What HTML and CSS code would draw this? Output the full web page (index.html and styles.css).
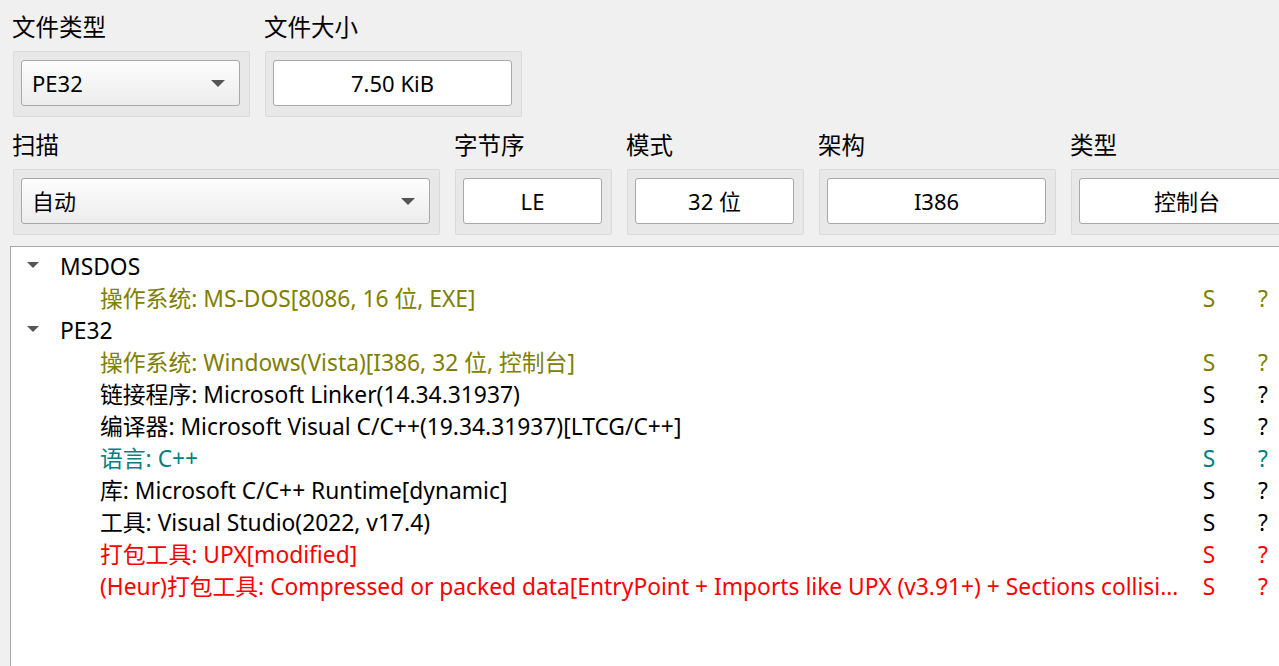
FILE: index.html
```html
<!DOCTYPE html>
<html lang="zh-CN">
<head>
  <meta charset="UTF-8" />
  <title>Detect It Easy</title>
  <link rel="stylesheet" href="styles.css">
</head>
<body>
  <div class="form-row">
    <div class="field">
      <label>文件类型</label>
      <div class="frame">
        <div class="combo w-type">PE32<span class="arrow"></span></div>
      </div>
    </div>
    <div class="field">
      <label>文件大小</label>
      <div class="frame">
        <div class="value w-size">7.50 KiB</div>
      </div>
    </div>
  </div>

  <div class="form-row second">
    <div class="field">
      <label>扫描</label>
      <div class="frame">
        <div class="combo w-scan">自动<span class="arrow"></span></div>
      </div>
    </div>
    <div class="field">
      <label>字节序</label>
      <div class="frame">
        <div class="value w-endian">LE</div>
      </div>
    </div>
    <div class="field">
      <label>模式</label>
      <div class="frame">
        <div class="value w-mode">32 位</div>
      </div>
    </div>
    <div class="field">
      <label>架构</label>
      <div class="frame">
        <div class="value w-arch">I386</div>
      </div>
    </div>
    <div class="field">
      <label>类型</label>
      <div class="frame">
        <div class="value w-kind">控制台</div>
      </div>
    </div>
  </div>

  <div class="tree">
    <div class="node"><span class="toggle"></span>MSDOS</div>
    <div class="leaf olive"><span class="text">操作系统: MS-DOS[8086, 16 位, EXE]</span><span class="col-s">S</span><span class="col-q">?</span></div>
    <div class="node"><span class="toggle"></span>PE32</div>
    <div class="leaf olive"><span class="text">操作系统: Windows(Vista)[I386, 32 位, 控制台]</span><span class="col-s">S</span><span class="col-q">?</span></div>
    <div class="leaf"><span class="text">链接程序: Microsoft Linker(14.34.31937)</span><span class="col-s">S</span><span class="col-q">?</span></div>
    <div class="leaf"><span class="text">编译器: Microsoft Visual C/C++(19.34.31937)[LTCG/C++]</span><span class="col-s">S</span><span class="col-q">?</span></div>
    <div class="leaf teal"><span class="text">语言: C++</span><span class="col-s">S</span><span class="col-q">?</span></div>
    <div class="leaf"><span class="text">库: Microsoft C/C++ Runtime[dynamic]</span><span class="col-s">S</span><span class="col-q">?</span></div>
    <div class="leaf"><span class="text">工具: Visual Studio(2022, v17.4)</span><span class="col-s">S</span><span class="col-q">?</span></div>
    <div class="leaf red"><span class="text">打包工具: UPX[modified]</span><span class="col-s">S</span><span class="col-q">?</span></div>
    <div class="leaf red"><span class="text">(Heur)打包工具: Compressed or packed data[EntryPoint + Imports like UPX (v3.91+) + Sections collision]</span><span class="col-s">S</span><span class="col-q">?</span></div>
  </div>
</body>
</html>
```

FILE: styles.css
```css
html, body {
  margin: 0;
  height: 100%;
}
body {
  background-color: #f0f0f0;
  font-family: "Noto Sans", "Noto Sans CJK SC", sans-serif;
  font-size: 22px;
  color: #000;
  overflow: hidden;
  padding-top: 14px;
  box-sizing: border-box;
}
.form-row {
  display: flex;
  gap: 15px;
  padding-left: 13px;
  white-space: nowrap;
}
.form-row.second {
  margin-top: 15px;
}
.field label {
  display: block;
  height: 30px;
  line-height: 26px;
  font-size: 23.5px;
  margin-left: -1px;
  margin-bottom: 7px;
}
.frame {
  border: 1px solid #dadada;
  background-color: #e8e8e8;
  padding: 8px 9px 10px 7px;
  border-radius: 2px;
}
.combo, .value {
  box-sizing: border-box;
  height: 46px;
  line-height: 44px;
  border: 1px solid #a8a8a8;
  border-radius: 3px;
}
.combo {
  position: relative;
  padding-left: 10px;
  background: linear-gradient(#fdfdfd, #ececec);
}
.value {
  background-color: #fff;
  text-align: center;
}
.arrow {
  position: absolute;
  right: 14px;
  top: 19px;
  width: 0;
  height: 0;
  border-left: 7px solid transparent;
  border-right: 7px solid transparent;
  border-top: 7px solid #555;
}
.w-type { width: 219px; }
.w-size { width: 239px; }
.w-scan { width: 409px; }
.w-endian { width: 139px; }
.w-mode { width: 159px; }
.w-arch { width: 219px; }
.w-kind { width: 216px; }

.tree {
  margin: 11px 0 0 10px;
  height: 420px;
  background-color: #fff;
  border-top: 1px solid #a8a8a8;
  border-left: 1px solid #a8a8a8;
  padding-top: 4px;
  white-space: nowrap;
  font-size: 22.8px;
}
.node, .leaf {
  height: 32px;
  line-height: 32px;
  display: flex;
  align-items: center;
}
.node {
  padding-left: 49px;
  position: relative;
}
.toggle {
  position: absolute;
  left: 16px;
  top: 11px;
  width: 0;
  height: 0;
  border-left: 6px solid transparent;
  border-right: 6px solid transparent;
  border-top: 6px solid #555;
}
.leaf {
  padding-left: 89px;
}
.leaf .text {
  width: 1083px;
  overflow: hidden;
  text-overflow: ellipsis;
}
.col-s {
  width: 16px;
  margin-left: 18px;
  text-align: center;
}
.col-q {
  width: 14px;
  margin-left: 39px;
  text-align: center;
}
.olive { color: #808000; }
.teal { color: #008080; }
.red { color: #ff0000; }
```
